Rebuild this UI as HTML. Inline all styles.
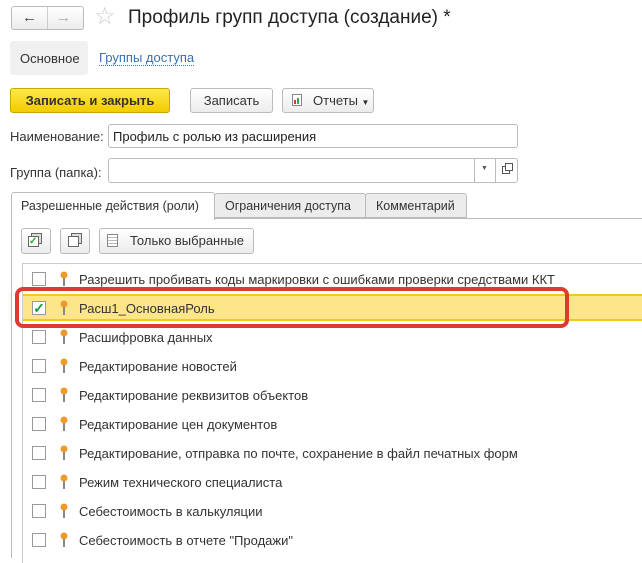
<!DOCTYPE html>
<html><head><meta charset="utf-8"><style>
*{box-sizing:border-box;margin:0;padding:0}
body{width:642px;height:553px;background:#fff;font-family:"Liberation Sans",Arial,sans-serif;font-size:13px;color:#333;position:relative;overflow:hidden}
.a{position:absolute;white-space:nowrap}
.btn{position:absolute;border:1px solid #bbb;border-radius:3px;background:linear-gradient(#fff,#ececec);height:25px;line-height:23px;text-align:center;color:#333;white-space:nowrap}
.row{position:absolute;left:22px;width:620px;height:29px;white-space:nowrap}
.cb{position:absolute;left:10px;top:7px;width:14px;height:14px;border:1px solid #999;background:#fff}
.pin{position:absolute;left:38px;top:6px}
.row span{position:absolute;left:57px;top:7px}
</style></head><body>
<div class="btn" style="left:11px;top:6px;width:73px;height:24px"></div>
<div class="a" style="left:47px;top:7px;width:1px;height:22px;background:#ccc"></div>
<div class="a" style="left:22px;top:9px;font-size:15px;color:#444;font-weight:bold">←</div>
<div class="a" style="left:56px;top:9px;font-size:15px;color:#aaa;font-weight:bold">→</div>
<div class="a" style="left:94px;top:2px;font-size:24px;color:#ccc">☆</div>
<div class="a" style="left:128px;top:7px;font-size:19px;color:#222">Профиль групп доступа (создание) *</div>
<div class="a" style="left:10px;top:41px;width:78px;height:34px;background:#f0f0f0;border-radius:3px"></div>
<div class="a" style="left:20px;top:51px;color:#333">Основное</div>
<div class="a" style="left:99px;top:51px;color:#3a6fb0;border-bottom:1px dotted #3a6fb0;line-height:14px">Группы доступа</div>
<div class="btn" style="left:10px;top:88px;width:160px;background:linear-gradient(#ffe84a,#f2cc00);border-color:#c8a800;font-weight:bold;color:#333">Записать и закрыть</div>
<div class="btn" style="left:190px;top:88px;width:83px">Записать</div>
<div class="btn" style="left:282px;top:88px;width:92px;text-align:left;padding-left:30px">Отчеты <span style="font-size:8px">▼</span></div>
<div class="a" style="left:292px;top:94px;width:10px;height:12px;border:1px solid #888;background:#fff"></div>
<div class="a" style="left:294px;top:100px;width:2px;height:4px;background:#d33"></div>
<div class="a" style="left:297px;top:98px;width:2px;height:6px;background:#3a3"></div>
<div class="a" style="left:10px;top:129px">Наименование:</div>
<div class="a" style="left:108px;top:124px;width:410px;height:24px;border:1px solid #bbb;border-radius:3px;padding:4px 4px;color:#222">Профиль с ролью из расширения</div>
<div class="a" style="left:10px;top:165px">Группа (папка):</div>
<div class="a" style="left:108px;top:158px;width:410px;height:25px;border:1px solid #bbb;border-radius:3px"></div>
<div class="a" style="left:474px;top:158px;width:1px;height:25px;background:#bbb"></div>
<div class="a" style="left:495px;top:158px;width:1px;height:25px;background:#bbb"></div>
<div class="a" style="left:481px;top:165px;font-size:7px;color:#555">▼</div>
<div class="a" style="left:502px;top:166px;width:8px;height:8px;border:1px solid #555"></div>
<div class="a" style="left:505px;top:163px;width:8px;height:8px;border:1px solid #555;background:#fff"></div>
<div class="a" style="left:11px;top:218px;width:640px;height:340px;border-left:1px solid #bbb;border-top:1px solid #bbb"></div>
<div class="a" style="left:11px;top:192px;width:204px;height:28px;border:1px solid #bbb;border-bottom:none;background:#fff;padding:6px 0 0 9px;border-radius:3px 3px 0 0;font-size:12.5px">Разрешенные действия (роли)</div>
<div class="a" style="left:214px;top:193px;width:152px;height:25px;border:1px solid #bbb;background:#ececec;padding:5px 0 0 10px;border-radius:3px 3px 0 0;font-size:12.5px">Ограничения доступа</div>
<div class="a" style="left:365px;top:193px;width:102px;height:25px;border:1px solid #bbb;background:#ececec;padding:5px 0 0 10px;border-radius:3px 3px 0 0;font-size:12.5px">Комментарий</div>
<div class="btn" style="left:21px;top:228px;width:30px;height:26px"></div>
<div class="a" style="left:31px;top:233px;width:11px;height:11px;border:1px solid #666;background:#ddd"></div>
<div class="a" style="left:28px;top:236px;width:11px;height:11px;border:1px solid #666;background:#fff;color:#2a2;font-size:10px;line-height:9px;font-weight:bold">✓</div>
<div class="btn" style="left:60px;top:228px;width:30px;height:26px"></div>
<div class="a" style="left:71px;top:233px;width:11px;height:11px;border:1px solid #666;background:#ddd"></div>
<div class="a" style="left:68px;top:236px;width:11px;height:11px;border:1px solid #666;background:#fff"></div>
<div class="btn" style="left:99px;top:228px;width:155px;height:26px;text-align:left;padding-left:30px">Только выбранные</div>
<div class="a" style="left:107px;top:234px;width:11px;height:13px;border:1px solid #888;background:repeating-linear-gradient(#fff 0 2px,#bbb 2px 3px)"></div>
<div class="a" style="left:22px;top:263px;width:620px;height:300px;border-left:1px solid #ccc;border-top:1px solid #ccc"></div>
<div class="a" style="left:23px;top:294px;width:619px;height:27px;background:#fde58a;border-top:2px solid #f2c81e;border-bottom:2px solid #f2c81e"></div>
<div class="a" style="left:15px;top:287px;width:554px;height:41px;border:4px solid #e03a30;border-radius:8px"></div>
<div id="rows"></div>
<script>
var t=["Разрешить пробивать коды маркировки с ошибками проверки средствами ККТ","Расш1_ОсновнаяРоль","Расшифровка данных","Редактирование новостей","Редактирование реквизитов объектов","Редактирование цен документов","Редактирование, отправка по почте, сохранение в файл печатных форм","Режим технического специалиста","Себестоимость в калькуляции","Себестоимость в отчете \"Продажи\""];
var h="";
t.forEach(function(s,i){var y=265+i*29;
h+='<div class="row" style="top:'+y+'px"><div class="cb">'+(i==1?'<div style="color:#1a9a3a;font-weight:bold;font-size:14px;line-height:12px;text-align:center">✓</div>':'')+'</div><svg class="pin" width="8" height="16"><circle cx="4" cy="4" r="3.5" fill="#f09a2a"/><rect x="3" y="7" width="2" height="8" fill="#888"/></svg><span>'+s.replace(/</g,"&lt;")+'</span></div>';});
document.getElementById("rows").innerHTML=h;
</script>
</body></html>
